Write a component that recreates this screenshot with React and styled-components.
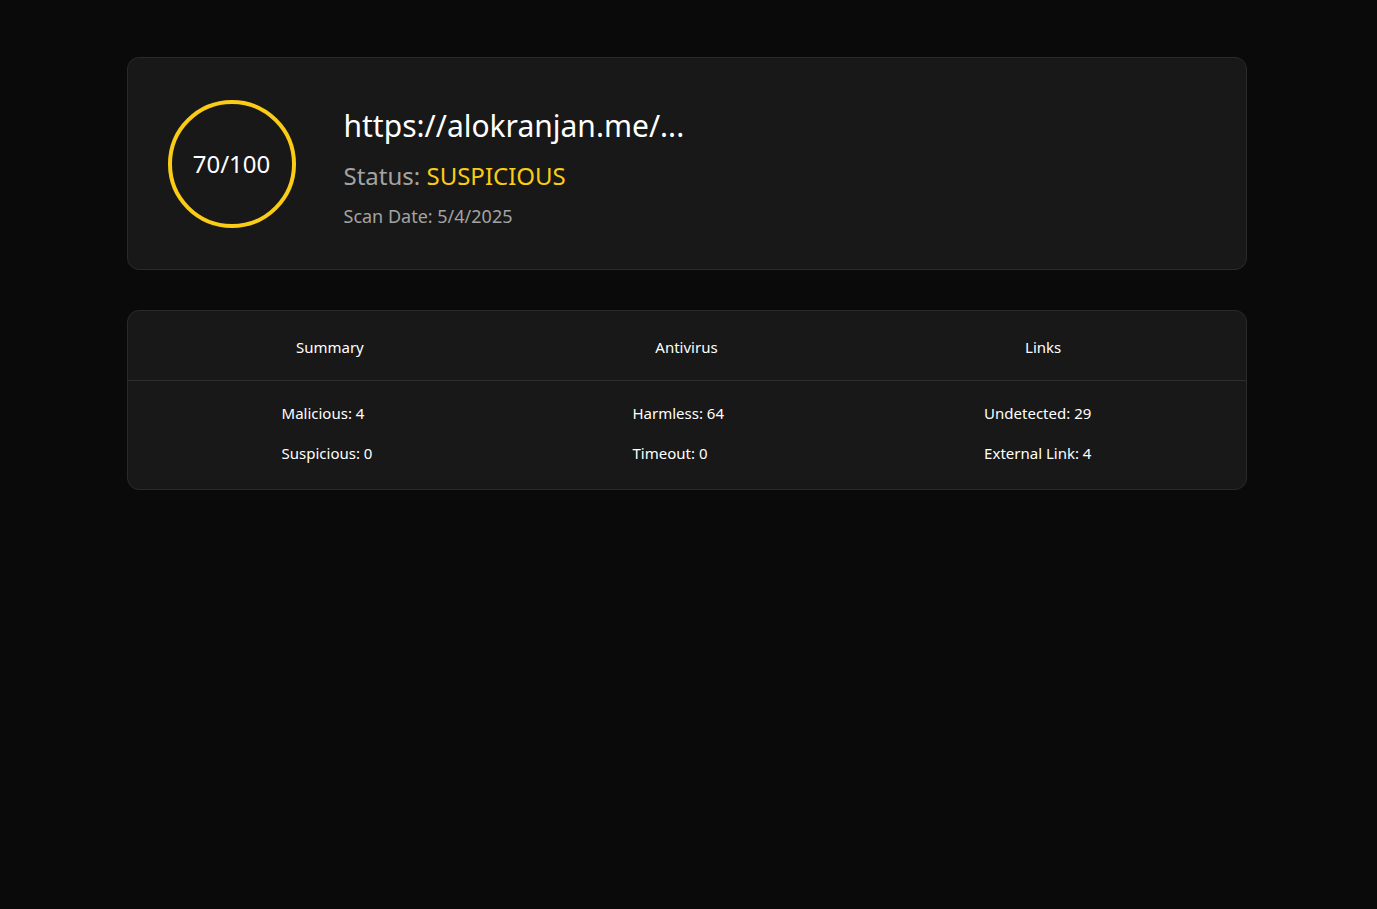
import React from 'react';
import styled, { createGlobalStyle } from 'styled-components';

const GlobalStyle = createGlobalStyle`
  html, body {
    margin: 0;
    padding: 0;
    background: #0a0a0a;
    color: #ffffff;
    font-family: "Noto Sans", "Open Sans", sans-serif;
  }
`;

const Page = styled.div`
  min-height: 909px;
  background: #0a0a0a;
  padding: 57px 4px 0 0;
  box-sizing: border-box;
`;

const Container = styled.div`
  width: 1120px;
  margin: 0 auto;
  display: flex;
  flex-direction: column;
  gap: 40px;
`;

const Card = styled.div`
  background: #181818;
  border: 1px solid #2a2a2a;
  border-radius: 12px;
  box-sizing: border-box;
`;

const ScoreCard = styled(Card)`
  display: flex;
  align-items: center;
  gap: 48px;
  padding: 40px;
  height: 213px;
`;

const ScoreRing = styled.div`
  width: 128px;
  height: 128px;
  border: 4px solid ${(p) => p.color};
  border-radius: 50%;
  box-sizing: border-box;
  display: flex;
  align-items: center;
  justify-content: center;
  font-size: 24px;
  flex-shrink: 0;
`;

const Info = styled.div`
  display: flex;
  flex-direction: column;
  margin-top: 6px;
`;

const Url = styled.h1`
  margin: 0 0 14px;
  font-size: 30px;
  font-weight: 400;
  line-height: 40px;
  color: #ffffff;
`;

const StatusLine = styled.div`
  font-size: 24px;
  line-height: 32px;
  color: #a3a3a3;
  margin-bottom: 12px;
`;

const StatusValue = styled.span`
  color: ${(p) => p.color};
`;

const ScanDate = styled.div`
  font-size: 18px;
  line-height: 24px;
  color: #a3a3a3;
`;

const TabsCard = styled(Card)`
  overflow: hidden;
`;

const TabRow = styled.div`
  display: grid;
  grid-template-columns: repeat(3, 1fr);
  padding: 2px 24px 0;
  height: 70px;
  box-sizing: border-box;
  border-bottom: 1px solid #2e2e2e;
`;

const Tab = styled.div`
  display: flex;
  align-items: center;
  justify-content: center;
  font-size: 15px;
  color: #ffffff;
`;

const StatsRow = styled.div`
  display: flex;
  justify-content: space-around;
  padding: 20px 24px 24px;
`;

const StatList = styled.div`
  display: flex;
  flex-direction: column;
  gap: 16px;
`;

const Stat = styled.div`
  font-size: 15px;
  line-height: 24px;
  color: #ffffff;
`;

const stats = [
  ['Malicious: 4', 'Suspicious: 0'],
  ['Harmless: 64', 'Timeout: 0'],
  ['Undetected: 29', 'External Link: 4'],
];

export default function App() {
  return (
    <Page>
      <GlobalStyle />
      <Container>
        <ScoreCard>
          <ScoreRing color="#facc15">70/100</ScoreRing>
          <Info>
            <Url>https://alokranjan.me/...</Url>
            <StatusLine>
              Status: <StatusValue color="#facc15">SUSPICIOUS</StatusValue>
            </StatusLine>
            <ScanDate>Scan Date: 5/4/2025</ScanDate>
          </Info>
        </ScoreCard>
        <TabsCard>
          <TabRow>
            <Tab>Summary</Tab>
            <Tab>Antivirus</Tab>
            <Tab>Links</Tab>
          </TabRow>
          <StatsRow>
            {stats.map((col, i) => (
              <StatList key={i}>
                {col.map((s) => (
                  <Stat key={s}>{s}</Stat>
                ))}
              </StatList>
            ))}
          </StatsRow>
        </TabsCard>
      </Container>
    </Page>
  );
}
